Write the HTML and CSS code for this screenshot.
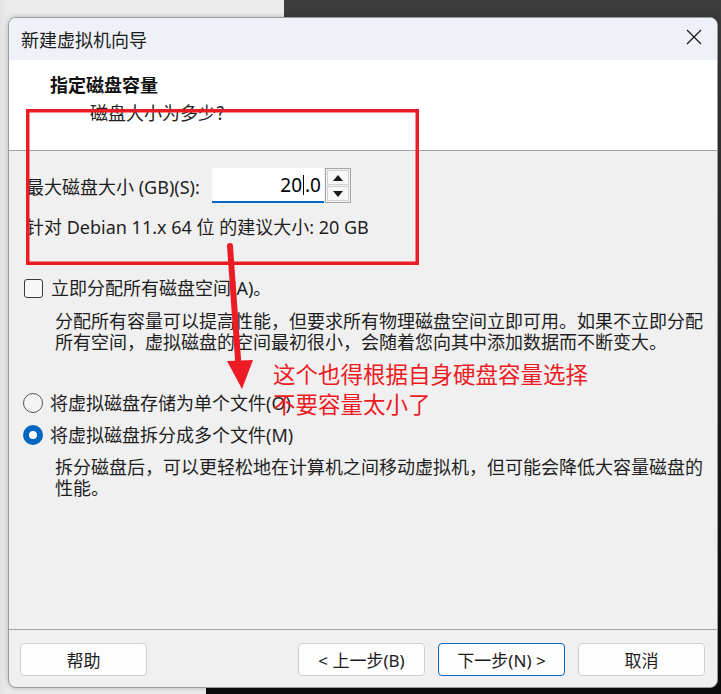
FILE: index.html
```html
<!DOCTYPE html>
<html lang="zh-CN">
<head>
<meta charset="utf-8">
<title>新建虚拟机向导</title>
<link rel="stylesheet" href="styles.css">
</head>
<body>
<div class="desk-dark"></div>
<div class="desk-right"></div>
<div class="desk-black"></div>

<div class="dialog">
  <div class="titlebar">
    <span class="title">新建虚拟机向导</span>
    <svg class="close" width="16" height="16" viewBox="0 0 16 16"><path d="M1 1 L15 15 M15 1 L1 15" stroke="#1a1a1a" stroke-width="1.3" fill="none"/></svg>
  </div>
  <div class="header">
    <div class="h-title">指定磁盘容量</div>
    <div class="h-sub">磁盘大小为多少?</div>
  </div>
  <div class="content">
    <div class="size-row">
      <label class="size-label">最大磁盘大小 (GB)(S):</label>
      <div class="input"><span>20</span><span class="caret"></span><span>.0</span></div>
      <div class="spin">
        <div class="spin-btn"><svg width="10" height="6" viewBox="0 0 10 6"><path d="M5 0 L10 6 L0 6 Z" fill="#1a1a1a"/></svg></div>
        <div class="spin-btn"><svg width="10" height="6" viewBox="0 0 10 6"><path d="M0 0 L10 0 L5 6 Z" fill="#1a1a1a"/></svg></div>
      </div>
    </div>
    <div class="suggest">针对 Debian 11.x 64 位 的建议大小: 20 GB</div>

    <div class="opt opt-check">
      <span class="checkbox"></span>
      <span>立即分配所有磁盘空间(A)。</span>
    </div>
    <div class="desc desc-1">分配所有容量可以提高性能，但要求所有物理磁盘空间立即可用。如果不立即分配<br>所有空间，虚拟磁盘的空间最初很小，会随着您向其中添加数据而不断变大。</div>

    <div class="opt opt-r1">
      <span class="radio"></span>
      <span>将虚拟磁盘存储为单个文件(O)</span>
    </div>
    <div class="opt opt-r2">
      <span class="radio checked"></span>
      <span>将虚拟磁盘拆分成多个文件(M)</span>
    </div>
    <div class="desc desc-2">拆分磁盘后，可以更轻松地在计算机之间移动虚拟机，但可能会降低大容量磁盘的<br>性能。</div>
  </div>
  <div class="footer">
    <button class="btn">帮助</button>
    <div class="spacer"></div>
    <button class="btn">&lt; 上一步(B)</button>
    <button class="btn primary">下一步(N) &gt;</button>
    <button class="btn">取消</button>
  </div>
</div>

<div class="note">这个也得根据自身硬盘容量选择<br>不要容量太小了</div>
<svg class="overlay" width="721" height="694" viewBox="0 0 721 694">
  <rect x="27.75" y="110.75" width="389.5" height="152.5" fill="none" stroke="#ed1c24" stroke-width="3.5"/>
  <path d="M230 246 L238.5 366" stroke="#ed1c24" stroke-width="6" stroke-linecap="round" fill="none"/>
  <path d="M227 361 L253 360 L242 389 Z" fill="#ed1c24"/>
</svg>
</body>
</html>
```

FILE: styles.css
```css
* { box-sizing: border-box; }

html, body {
  margin: 0;
  width: 721px;
  height: 694px;
  overflow: hidden;
}

body {
  position: relative;
  background: linear-gradient(90deg, #e2e2e2 0px, #ebebeb 8px, #ebebeb 100%);
  padding: 17px 0 0 8px;
  font-family: "Noto Sans", "Noto Sans CJK SC", sans-serif;
  color: #1e1e1e;
}

.desk-dark {
  position: absolute;
  left: 284px;
  top: 0;
  right: 0;
  height: 30px;
  background: #3c3c3c;
}

.desk-right {
  position: absolute;
  left: 700px;
  top: 0;
  right: 0;
  bottom: 0;
  background: linear-gradient(180deg, #3c3c3c 0%, #1e1e1e 60%, #0a0a0a 100%);
}

.desk-black {
  position: absolute;
  left: 206px;
  top: 670px;
  right: 0;
  bottom: 0;
  background: #0b0b0b;
}

.dialog {
  position: relative;
  z-index: 1;
  width: 710px;
  height: 671px;
  border: 1px solid #9c9c9c;
  border-radius: 8px;
  overflow: hidden;
  background: #f0f0f0;
  display: flex;
  flex-direction: column;
  box-shadow: 0 0 5px rgba(0, 0, 0, 0.25);
}

.titlebar {
  height: 42px;
  flex: none;
  background: #eef2f8;
  display: flex;
  align-items: center;
  justify-content: space-between;
  padding: 0 15px 0 12px;
}

.title {
  font-family: "Noto Sans CJK SC", sans-serif;
  font-size: 18px;
  color: #1b1b1b;
  line-height: 22px;
}

.close {
  display: block;
  margin-top: -4px;
}

.header {
  flex: none;
  height: 91px;
  background: #ffffff;
  border-bottom: 1px solid #a3a3a3;
  padding: 13px 0 0 41px;
}

.h-title {
  font-family: "Noto Sans CJK SC", sans-serif;
  font-weight: 700;
  font-size: 18px;
  line-height: 22px;
  color: #111;
}

.h-sub {
  font-family: "Noto Sans CJK SC", sans-serif;
  font-size: 18px;
  line-height: 22px;
  margin: 6px 0 0 40px;
  color: #222;
}

.content {
  flex: 1;
  padding: 17px 0 0 15px;
  font-size: 18px;
}

.size-row {
  display: flex;
  align-items: center;
  height: 35px;
  margin-left: 2px;
}

.size-label {
  width: 186px;
  line-height: 22px;
  padding-top: 2px;
}

.input {
  width: 112px;
  height: 35px;
  background: #ffffff;
  border-bottom: 2px solid #0067c0;
  display: flex;
  justify-content: flex-end;
  align-items: center;
  padding-right: 3px;
  font-size: 19px;
  color: #000;
}

.caret {
  width: 1px;
  height: 20px;
  background: #000;
  margin: 0 1px;
}

.spin {
  width: 26px;
  height: 35px;
  margin-left: 1px;
  border: 1px solid #a6a6a6;
  padding: 1px;
  display: flex;
  flex-direction: column;
  gap: 1px;
}

.spin-btn {
  flex: 1;
  border: 1px solid #d2d2d2;
  background: #f7f7f7;
  display: flex;
  align-items: center;
  justify-content: center;
}

.suggest {
  margin: 13px 0 0 2px;
  line-height: 22px;
}

.opt {
  display: flex;
  align-items: center;
  line-height: 22px;
}

.opt-check { margin-top: 39px; }
.opt-r1 { margin-top: 40px; }
.opt-r2 { margin-top: 10px; }

.checkbox {
  width: 19px;
  height: 19px;
  border: 1px solid #3a3a3a;
  border-radius: 3px;
  background: #f7f7f7;
  margin-right: 8px;
  flex: none;
}

.radio {
  width: 20px;
  height: 20px;
  border: 1px solid #555;
  border-radius: 50%;
  margin: 0 7px 0 -1px;
  flex: none;
  background: #f4f4f4;
}

.radio.checked {
  border: 6px solid #0067c0;
  background: #ffffff;
}

.desc {
  padding-left: 31px;
  line-height: 21px;
  font-family: "Noto Sans CJK SC", sans-serif;
  letter-spacing: 0;
  white-space: nowrap;
}

.desc-1 { margin-top: 11px; }
.desc-2 { margin-top: 10px; }

.footer {
  flex: none;
  height: 58px;
  border-top: 1px solid #a3a3a3;
  display: flex;
  align-items: flex-start;
  gap: 13px;
  padding: 13px 12px 0 11px;
}

.spacer { flex: 1; }

.btn {
  width: 127px;
  height: 33px;
  border: 1px solid #d0d0d0;
  border-radius: 4px;
  background: #fdfdfd;
  font-family: "Noto Sans", "Noto Sans CJK SC", sans-serif;
  font-size: 17px;
  color: #1b1b1b;
  padding: 0;
}

.btn.primary {
  border-color: #0067c0;
}

.note {
  position: absolute;
  z-index: 5;
  left: 273px;
  top: 358px;
  font-family: "Noto Sans CJK SC", sans-serif;
  font-size: 22.5px;
  line-height: 30px;
  color: #ed1c24;
}

.overlay {
  position: absolute;
  z-index: 6;
  left: 0;
  top: 0;
  pointer-events: none;
}
```
